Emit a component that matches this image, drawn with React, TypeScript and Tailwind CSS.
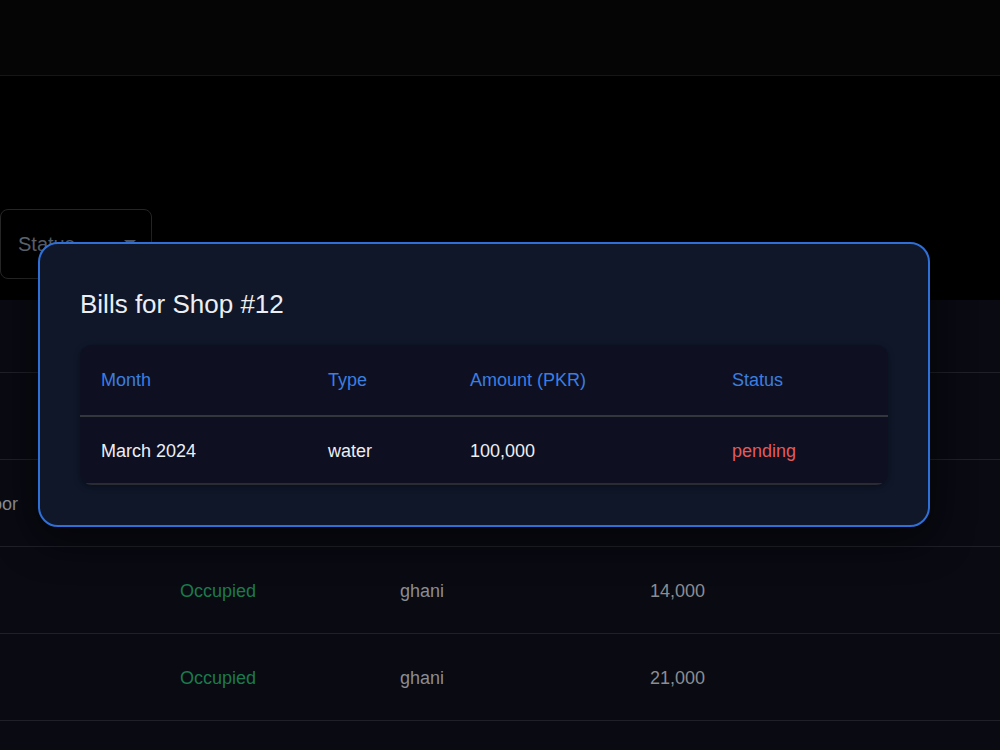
const bills = [{ month: 'March 2024', type: 'water', amount: '100,000', status: 'pending' }];

const shops = [
  { floor: '', status: '', tenant: '', rent: '' },
  { floor: 'Ground Floor', status: '', tenant: '', rent: '' },
  { floor: '', status: 'Occupied', tenant: 'ghani', rent: '14,000' },
  { floor: '', status: 'Occupied', tenant: 'ghani', rent: '21,000' },
  { floor: '', status: '', tenant: '', rent: '' },
];

export default function App() {
  return (
    <main className="relative h-[750px] w-[1000px] overflow-hidden bg-black font-['Liberation_Sans',Arial,sans-serif]">
      {/* Top bar */}
      <div className="h-[76px] border-b border-[#161616] bg-[#050505]" />

      {/* Filters */}
      <div className="flex h-[224px] items-start pt-[133px]">
        <div className="flex h-[70px] w-[152px] items-center justify-between rounded-lg border border-[#262626] pl-[17px] pr-[15px]">
          <span className="text-[20px] text-[#5f6672]">Status</span>
          <svg width="12" height="6" viewBox="0 0 12 6" className="-mt-[2px]">
            <path d="M0 0h12L6 6z" fill="#5f6672" />
          </svg>
        </div>
      </div>

      {/* Shops table (behind modal) */}
      <div className="bg-[#090a12]">
        <div className="h-[73px] border-b border-[#1f2028]" />
        {shops.map((s, i) => (
          <div
            key={i}
            className="-ml-[88px] grid h-[87px] grid-cols-[268px_220px_250px_1fr] items-center border-b border-[#1f2028] pt-[2px] text-[18px]"
          >
            <span className="text-[#8a8d93]">{s.floor}</span>
            <span className="text-[#1b7a4c]">{s.status}</span>
            <span className="text-[#8a8d93]">{s.tenant}</span>
            <span className="text-[#8a8d93]">{s.rent}</span>
          </div>
        ))}
      </div>

      {/* Bills modal */}
      <div className="absolute left-[38px] top-[242px] w-[892px] rounded-[20px] border-2 border-[#2f6fd8] bg-[#0f1729] p-10 shadow-[0_10px_40px_rgba(0,0,0,0.6)]">
        <h2 className="mb-[21px] text-[26px] leading-[40px] text-[#eceef2]">Bills for Shop #12</h2>
        <div className="overflow-hidden rounded-xl bg-[#0e1022] shadow-[0_2px_6px_rgba(0,0,0,0.35)]">
          <div className="grid h-[72px] grid-cols-[227px_142px_262px_1fr] items-center border-b-2 border-[#34363d] pt-[1px] text-[18px] text-[#3b7ee0]">
            <span className="pl-[21px]">Month</span>
            <span className="pl-[21px]">Type</span>
            <span className="pl-[21px]">Amount (PKR)</span>
            <span className="pl-[21px]">Status</span>
          </div>
          {bills.map((b) => (
            <div
              key={b.month}
              className="grid h-[68px] grid-cols-[227px_142px_262px_1fr] items-center border-b-2 border-[#2a2c33] pt-[2px] text-[18px] font-medium text-[#eceef2]"
            >
              <span className="pl-[21px]">{b.month}</span>
              <span className="pl-[21px]">{b.type}</span>
              <span className="pl-[21px]">{b.amount}</span>
              <span className="pl-[21px] text-[#e25a5a]">{b.status}</span>
            </div>
          ))}
        </div>
      </div>
    </main>
  );
}
